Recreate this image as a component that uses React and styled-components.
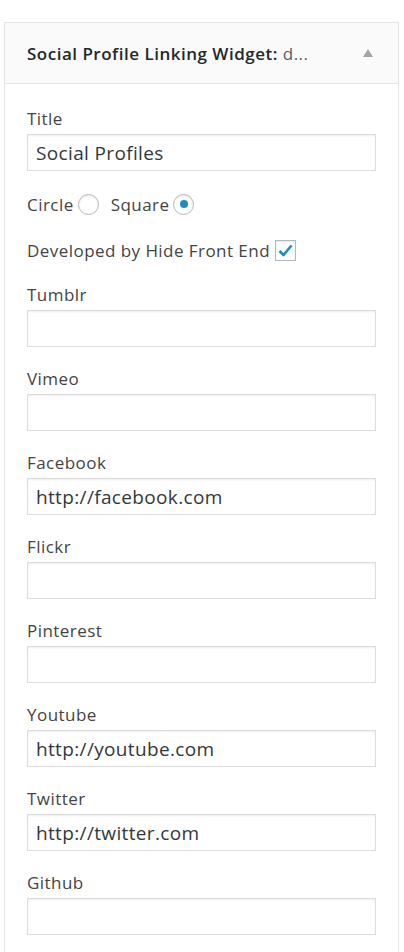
import React from 'react';
import styled, { createGlobalStyle } from 'styled-components';

const GlobalStyle = createGlobalStyle`
  body {
    margin: 0;
    background: #ffffff;
    font-family: "Open Sans", "Noto Sans", sans-serif;
    color: #444444;
  }
`;

const Page = styled.div`
  padding: 22px 5px 0 4px;
  height: 952px;
  box-sizing: border-box;
  overflow: hidden;
`;

const Widget = styled.div`
  border: 1px solid #e5e5e5;
  box-shadow: 0 1px 1px rgba(0, 0, 0, 0.04);
  background: #fff;
`;

const WidgetTop = styled.div`
  display: flex;
  align-items: center;
  justify-content: space-between;
  height: 60px;
  padding: 0 25px 0 22px;
  background: #fafafa;
  border-bottom: 1px solid #e5e5e5;
`;

const WidgetTitle = styled.h3`
  margin: 0;
  font-size: 17px;
  letter-spacing: 0.5px;
  font-weight: 600;
  color: #23282d;
  white-space: nowrap;
`;

const InTitle = styled.span`
  font-weight: 400;
  color: #555d66;
`;

const Toggle = styled.span`
  width: 0;
  height: 0;
  border-left: 5.5px solid transparent;
  border-right: 5.5px solid transparent;
  border-bottom: 8px solid #a0a5aa;
`;

const WidgetInside = styled.div`
  padding: 24px 22px 20px 22px;
`;

const Field = styled.div`
  margin-bottom: ${(p) => p.$mb || 21}px;
`;

const Label = styled.label`
  display: block;
  font-size: 17px;
  letter-spacing: 0.45px;
  line-height: 22px;
  color: #444;
  margin-bottom: 4px;
`;

const TextInput = styled.input`
  display: block;
  width: 100%;
  box-sizing: border-box;
  height: 37px;
  padding: 0 8px;
  border: 1px solid #dddddd;
  box-shadow: inset 0 1px 2px rgba(0, 0, 0, 0.07);
  font-family: "Open Sans", "Noto Sans", sans-serif;
  font-size: 19px;
  letter-spacing: 0.35px;
  color: #32373c;
  background: #fff;
  outline: none;
`;

const InlineRow = styled.div`
  display: flex;
  align-items: center;
  height: 24px;
  font-size: 17px;
  letter-spacing: 0.45px;
  color: #444;
  margin-bottom: ${(p) => p.$mb || 0}px;
`;

const OptionText = styled.span`
  margin-left: ${(p) => p.$ml || 0}px;
`;

const Radio = styled.span`
  width: 21px;
  height: 21px;
  box-sizing: border-box;
  margin-left: 4px;
  border: 1px solid #b4b9be;
  border-radius: 50%;
  box-shadow: inset 0 1px 2px rgba(0, 0, 0, 0.1);
  background: #fff;
  display: flex;
  align-items: center;
  justify-content: center;

  &::before {
    content: '';
    display: ${(p) => (p.$checked ? 'block' : 'none')};
    width: 8px;
    height: 8px;
    border-radius: 50%;
    background: #1e8cbe;
  }
`;

const CheckBox = styled.span`
  width: 21px;
  height: 21px;
  box-sizing: border-box;
  margin-left: 5px;
  border: 1px solid #b4b9be;
  box-shadow: inset 0 1px 2px rgba(0, 0, 0, 0.1);
  background: #fff;
  display: flex;
  align-items: center;
  justify-content: center;
`;

const fields = [
  { label: 'Tumblr', value: '' },
  { label: 'Vimeo', value: '' },
  { label: 'Facebook', value: 'http://facebook.com' },
  { label: 'Flickr', value: '' },
  { label: 'Pinterest', value: '' },
  { label: 'Youtube', value: 'http://youtube.com' },
  { label: 'Twitter', value: 'http://twitter.com' },
  { label: 'Github', value: '' },
];

const App = () => {
  return (
    <>
      <GlobalStyle />
      <Page>
        <Widget>
          <WidgetTop>
            <WidgetTitle>
              Social Profile Linking Widget: <InTitle>d...</InTitle>
            </WidgetTitle>
            <Toggle />
          </WidgetTop>
          <WidgetInside>
            <Field $mb={21}>
              <Label>Title</Label>
              <TextInput defaultValue="Social Profiles" />
            </Field>
            <InlineRow $mb={22}>
              <OptionText>Circle</OptionText>
              <Radio />
              <OptionText $ml={12}>Square</OptionText>
              <Radio $checked />
            </InlineRow>
            <InlineRow $mb={22}>
              <OptionText>Developed by Hide Front End</OptionText>
              <CheckBox>
                <svg width="15" height="13" viewBox="0 0 15 13">
                  <path d="M1.5 7 L5.5 11 L13.5 1.5" fill="none" stroke="#1e8cbe" strokeWidth="2.6" strokeLinejoin="round" />
                </svg>
              </CheckBox>
            </InlineRow>
            {fields.map((f) => (
              <Field key={f.label}>
                <Label>{f.label}</Label>
                <TextInput defaultValue={f.value} />
              </Field>
            ))}
          </WidgetInside>
        </Widget>
      </Page>
    </>
  );
};

export default App;
